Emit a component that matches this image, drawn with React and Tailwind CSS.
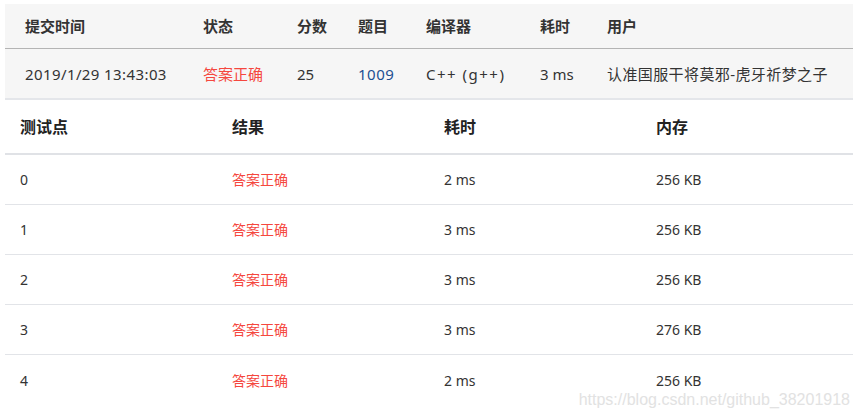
const submission = {
  time: "2019/1/29 13:43:03",
  status: "答案正确",
  score: "25",
  problem: "1009",
  compiler: "C++ (g++)",
  cost: "3 ms",
  user: "认准国服干将莫邪-虎牙祈梦之子",
};

const cases = [
  { id: "0", cost: "2 ms", mem: "256 KB" },
  { id: "1", cost: "3 ms", mem: "256 KB" },
  { id: "2", cost: "3 ms", mem: "256 KB" },
  { id: "3", cost: "3 ms", mem: "276 KB" },
  { id: "4", cost: "2 ms", mem: "256 KB" },
];

const font = "font-['Segoe_UI','Noto_Sans','Noto_Sans_CJK_SC',sans-serif]";

export default function App() {
  return (
    <div className={`relative w-[861px] h-[418px] bg-white pt-1 pl-[5px] pr-2 ${font}`}>
      {/* Submission summary */}
      <div className="bg-[#f6f6f6] text-[15px] text-[#333]">
        <div className="flex items-center h-[45px] border-b border-[#b4b4b4] font-bold">
          <div className="w-[198px] pl-5">提交时间</div>
          <div className="w-[94px]">状态</div>
          <div className="w-[61px]">分数</div>
          <div className="w-[68px]">题目</div>
          <div className="w-[114px]">编译器</div>
          <div className="w-[67px]">耗时</div>
          <div className="flex-1">用户</div>
        </div>
        <div className="flex items-center h-[51px] pt-px border-b-2 border-[#e4e6ea]">
          <div className="w-[198px] pl-5 tracking-[0.4px]">{submission.time}</div>
          <div className="w-[94px] text-[#f5473e]">{submission.status}</div>
          <div className="w-[61px]">{submission.score}</div>
          <div className="w-[68px] text-[#1d4f91] tracking-[0.5px]">{submission.problem}</div>
          <div className="w-[114px] tracking-[1.5px]">{submission.compiler}</div>
          <div className="w-[67px]">{submission.cost}</div>
          <div className="flex-1 whitespace-nowrap tracking-[0.4px]">{submission.user}</div>
        </div>
      </div>

      {/* Test points */}
      <div className="text-[14px] text-[#333]">
        <div className="grid grid-cols-4 items-center h-[55px] border-b-2 border-[#e0e2e6] text-[16px] font-bold text-[#222]">
          <div className="pl-[15px]">测试点</div>
          <div className="pl-[15px]">结果</div>
          <div className="pl-[15px]">耗时</div>
          <div className="pl-[15px]">内存</div>
        </div>
        {cases.map((c, i) => (
          <div
            key={c.id}
            className={`grid grid-cols-4 items-center h-[50px] ${
              i < cases.length - 1 ? "border-b border-[#e2e4e8]" : ""
            }`}
          >
            <div className="pl-[15px]">{c.id}</div>
            <div className="pl-[15px] text-[#f5473e]">答案正确</div>
            <div className="pl-[15px]">{c.cost}</div>
            <div className="pl-[15px]">{c.mem}</div>
          </div>
        ))}
      </div>

      <div className="absolute right-[11px] top-[388px] font-['Liberation_Sans',Arial,sans-serif] text-[16px] text-[#e2e2e2]">
        https://blog.csdn.net/github_38201918
      </div>
    </div>
  );
}
